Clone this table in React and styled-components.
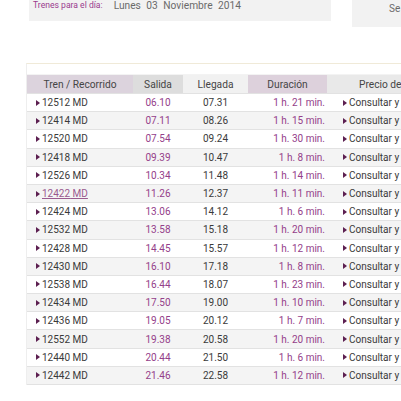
import styled, { createGlobalStyle } from "styled-components";

const Global = createGlobalStyle`
  html, body {
    margin: 0;
    padding: 0;
    background: #ffffff;
    overflow: hidden;
    font-family: Roboto, "Liberation Sans", sans-serif;
  }
`;

const Page = styled.div`
  width: 401px;
  height: 401px;
  overflow: hidden;
`;

const TopBar = styled.div`
  display: flex;
  align-items: flex-start;
`;

const DayPanel = styled.div`
  margin-left: 29px;
  width: 302px;
  height: 21px;
  background: #f2f2f2;
  display: flex;
  align-items: flex-start;
  box-sizing: border-box;
  padding-left: 4px;
`;

const DayLabel = styled.span`
  color: #9a3b8e;
  font-size: 8.6px;
  line-height: 11px;
  margin-right: 11px;
`;

const DayValue = styled.span`
  color: #6a6a6a;
  font-size: 10.2px;
  line-height: 11px;
  word-spacing: 3px;
`;

const SidePanel = styled.div`
  margin-left: 21px;
  flex: 1;
  height: 27px;
  background: #f2f2f2;
  color: #6a6a6a;
  font-size: 10px;
  padding: 3px 0 0 37px;
  box-sizing: border-box;
`;

const Table = styled.div`
  margin: 36px 0 0 26px;
  width: 430px;
  border-top: 1px solid #f0ead8;
  border-left: 1px solid #eeeeee;
`;

const Caption = styled.div`
  height: 10px;
  border-bottom: 1px solid #f3f3f3;
`;

const Row = styled.div`
  display: grid;
  grid-template-columns: 106px 50px 65px 79px 130px;
  height: ${(p) => (p.$head ? "18px" : "17.2px")};
  border-bottom: 1px solid #e2e2e2;
  background: ${(p) => (p.$odd ? "#f4f4f4" : "#ffffff")};
  font-size: 10px;
  align-items: center;
`;

const Head = styled.div`
  height: 100%;
  display: flex;
  align-items: center;
  justify-content: ${(p) => p.$justify || "center"};
  padding-left: ${(p) => p.$pl || 0}px;
  background: ${(p) => p.$bg};
  color: #454545;
  font-size: 10.2px;
`;

const Cell = styled.div`
  display: flex;
  align-items: center;
  justify-content: ${(p) => p.$justify || "center"};
  padding-left: ${(p) => p.$pl || 0}px;
  padding-right: ${(p) => p.$pr || 0}px;
  color: ${(p) => (p.$purple ? "#94408a" : "#3a3a3a")};
  white-space: nowrap;
`;

const Arrow = styled.span`
  display: inline-block;
  width: 0;
  height: 0;
  border-top: 3.5px solid transparent;
  border-bottom: 3.5px solid transparent;
  border-left: 4px solid #5c1f50;
  margin-right: 2px;
`;

const TrainLink = styled.span`
  color: ${(p) => (p.$link ? "#9a5a8f" : "#3a3a3a")};
  text-decoration: ${(p) => (p.$link ? "underline" : "none")};
`;

const trains = [
  ["12512", "06.10", "07.31", "1 h. 21 min."],
  ["12414", "07.11", "08.26", "1 h. 15 min."],
  ["12520", "07.54", "09.24", "1 h. 30 min."],
  ["12418", "09.39", "10.47", "1 h. 8 min."],
  ["12526", "10.34", "11.48", "1 h. 14 min."],
  ["12422", "11.26", "12.37", "1 h. 11 min."],
  ["12424", "13.06", "14.12", "1 h. 6 min."],
  ["12532", "13.58", "15.18", "1 h. 20 min."],
  ["12428", "14.45", "15.57", "1 h. 12 min."],
  ["12430", "16.10", "17.18", "1 h. 8 min."],
  ["12538", "16.44", "18.07", "1 h. 23 min."],
  ["12434", "17.50", "19.00", "1 h. 10 min."],
  ["12436", "19.05", "20.12", "1 h. 7 min."],
  ["12552", "19.38", "20.58", "1 h. 20 min."],
  ["12440", "20.44", "21.50", "1 h. 6 min."],
  ["12442", "21.46", "22.58", "1 h. 12 min."],
];

export default function App() {
  return (
    <Page>
      <Global />
      <TopBar>
        <DayPanel>
          <DayLabel>Trenes para el día:</DayLabel>
          <DayValue>Lunes 03 Noviembre 2014</DayValue>
        </DayPanel>
        <SidePanel>Se</SidePanel>
      </TopBar>

      <Table>
        <Caption />
        <Row $head>
          <Head $bg="#dcd3dd">Tren / Recorrido</Head>
          <Head $bg="#dddddd">Salida</Head>
          <Head $bg="#f1f1f1">Llegada</Head>
          <Head $bg="#ddd1dc">Duración</Head>
          <Head $bg="#e9e9e9" $justify="flex-start" $pl={32}>
            Precio de viaje
          </Head>
        </Row>
        {trains.map(([num, dep, arr, dur], i) => (
          <Row key={num} $odd={i % 2 === 1}>
            <Cell $justify="flex-start" $pl={9}>
              <Arrow />
              <TrainLink $link={num === "12422"}>{num} MD</TrainLink>
            </Cell>
            <Cell $purple>{dep}</Cell>
            <Cell>{arr}</Cell>
            <Cell $purple $justify="flex-end" $pr={2}>
              {dur}
            </Cell>
            <Cell $justify="flex-start" $pl={16}>
              <Arrow />
              Consultar y comprar
            </Cell>
          </Row>
        ))}
      </Table>
    </Page>
  );
}
